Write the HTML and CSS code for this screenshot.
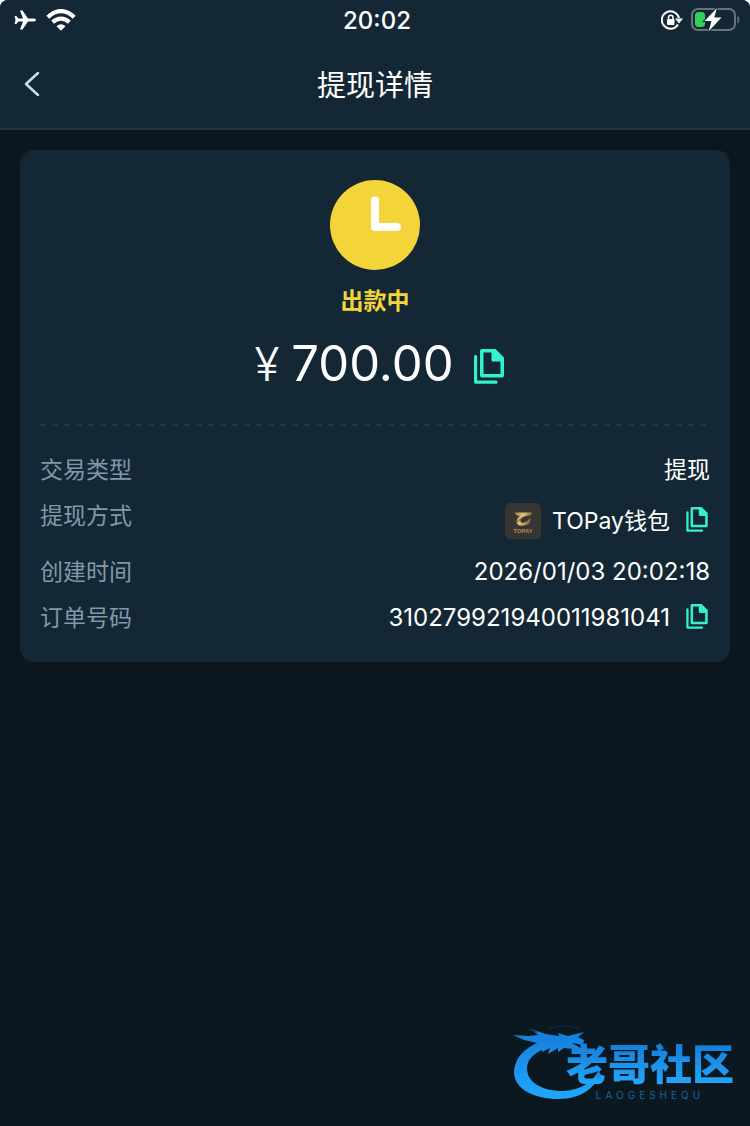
FILE: index.html
```html
<!DOCTYPE html>
<html lang="zh-CN">
<head>
<meta charset="utf-8">
<meta name="viewport" content="width=device-width, initial-scale=1">
<title>提现详情</title>
<link rel="stylesheet" href="styles.css">
</head>
<body>
<svg class="defs" width="0" height="0" aria-hidden="true">
  <symbol id="copy" viewBox="0 0 30 35">
    <path d="M1.6 7.5V33.2H22" fill="none" stroke="currentColor" stroke-width="3.2" stroke-linecap="round" stroke-linejoin="round"/>
    <path fill-rule="evenodd" d="M8 0H21.5L30 8.5V26.500Q30 28.500 28 28.500H8Q6 28.500 6 26.500V2Q6 0 8 0ZM9.500 3.500V25H26.500V12.500H19Q17.500 12.500 17.500 11V3.500Z" fill="currentColor"/>
  </symbol>
</svg>
<div class="screen">
  <header class="top">
    <div class="status">
      <div class="status-left">
        <svg width="22" height="20" viewBox="0 0 22 20" aria-hidden="true"><path fill="#fff" d="M22 10Q22 11.400 19.500 11.400H14L8.500 19.500H6L9 11.400H4.500L2.300 14H.6L1.500 10L.6 6H2.300L4.500 8.600H9L6 .5H8.500L14 8.600H19.500Q22 8.600 22 10Z"/></svg>
        <svg width="30" height="22" viewBox="0 0 30 22" aria-hidden="true"><g fill="none" stroke="#fff" stroke-width="4.200"><path d="M1.800 8.200Q15-4 28.200 8.200"/><path d="M6.600 13.200Q15 6 23.400 13.200"/></g><path fill="#fff" d="M10.500 17.200Q15 13.500 19.500 17.200L15 21.800Z"/></svg>
      </div>
      <time class="clock">20:02</time>
      <div class="status-right">
        <svg width="22" height="20" viewBox="0 0 22 20" aria-hidden="true"><path d="M17 14.500A8.700 8.700 0 1 1 18 8" fill="none" stroke="#fff" stroke-width="2"/><path fill="#fff" d="M14 8.500H22L18 13.500Z"/><rect x="6" y="9" width="7.500" height="6" rx="1" fill="#fff"/><path d="M7.500 9.500V7.500A2.200 2.200 0 0 1 12 7.500V9.500" fill="none" stroke="#fff" stroke-width="1.500"/></svg>
        <svg width="49" height="24" viewBox="0 0 49 24" aria-hidden="true"><rect x="1" y="1" width="43" height="21" rx="6" fill="none" stroke="#66747e" stroke-width="2"/><path d="M47 8.500Q49 11.500 47 15Z" fill="#66747e" stroke="#66747e"/><rect x="4" y="4" width="10" height="15" rx="3.500" fill="#32cf5b"/><path d="M26 0L13.500 13H20.500L17.500 23.500L30.500 9.500H23.200Z" fill="#fff" stroke="#142735" stroke-width="2" paint-order="stroke"/></svg>
      </div>
    </div>
    <div class="nav">
      <button class="back" type="button" aria-label="返回"><svg width="18" height="26" viewBox="0 0 18 26" aria-hidden="true"><path d="M15 2L3 13L15 24" fill="none" stroke="#c8dcec" stroke-width="2.500" stroke-linecap="round" stroke-linejoin="round"/></svg></button>
      <h1 class="title">提现详情</h1>
    </div>
  </header>
  <main class="card">
    <section class="summary">
      <svg width="90" height="90" viewBox="0 0 90 90" aria-hidden="true"><circle cx="45" cy="45" r="45" fill="#f3d539"/><path d="M45 20.500V47H67" fill="none" stroke="#fff" stroke-width="8" stroke-linecap="round" stroke-linejoin="round"/></svg>
      <p class="state">出款中</p>
      <div class="amount"><span class="currency">¥</span><span class="number">700.00</span><button class="copy copy-large" type="button" aria-label="复制金额"><svg aria-hidden="true"><use href="#copy"/></svg></button></div>
    </section>
    <dl class="details">
      <div class="row"><dt>交易类型</dt><dd>提现</dd></div>
      <div class="row row-method"><dt>提现方式</dt><dd>
        <svg class="wallet" viewBox="0 0 36 36" aria-hidden="true"><defs><linearGradient id="gold" x2="1" y2=".3"><stop stop-color="#a87a3f"/><stop offset=".5" stop-color="#e3c27c"/><stop offset="1" stop-color="#8a6535"/></linearGradient></defs><rect width="36" height="36" rx="5" fill="#373534"/><path fill="url(#gold)" d="M9.500 9.500H27Q26 13 22.500 13.300Q16 14 15.300 18Q15.300 20.500 19 19.500Q23.500 18 25.500 14.500Q26.500 21 20 22.500Q11.500 24 11.500 18.500Q11.800 14.500 15 13Q11 13 9.500 9.500Z"/><path d="M12 19Q16 14 24 12.500" stroke="#373534" stroke-width=".8" fill="none"/><text class="wallet-name" x="18" y="30" text-anchor="middle">TOPAY</text></svg>
        <span>TOPay钱包</span><button class="copy" type="button" aria-label="复制提现方式"><svg aria-hidden="true"><use href="#copy"/></svg></button></dd></div>
      <div class="row"><dt>创建时间</dt><dd class="digits">2026/01/03 20:02:18</dd></div>
      <div class="row"><dt>订单号码</dt><dd class="digits"><span>310279921940011981041</span><button class="copy" type="button" aria-label="复制订单号码"><svg aria-hidden="true"><use href="#copy"/></svg></button></dd></div>
    </dl>
  </main>
  <aside class="brand">
    <svg class="dragon" width="90" height="76" viewBox="0 0 90 76" aria-hidden="true"><defs><linearGradient id="blue" gradientUnits="userSpaceOnUse" x1="0" y1="0" x2="0" y2="76"><stop stop-color="#1479d8"/><stop offset="1" stop-color="#20a8ff"/></linearGradient></defs><g fill="url(#blue)"><path d="M30 17Q3 27 2 48C2 66 24 75 46 75C70 75 88 62 88 44C82 58 68 66 52 67C32 67 15 60 15 44Q15 32 34 24Z"/><path d="M1 11L16 12L26 11L19 5L34 10L47 12L46 9L56 12L72 8L66 13L72 16L71 21L60 19L70 25L66 29L62 25L52 24L46 28L46 24L36 30L38 24L30 28L30 20L12 16Z"/></g><path d="M37 5Q54-1 68 5M25 8L16 5" fill="none" stroke="#12304a" stroke-width="1"/></svg>
    <div class="brand-words"><span class="brand-name">老哥社区</span><span class="brand-latin">LAOGESHEQU</span></div>
  </aside>
</div>
</body>
</html>
```
FILE: styles.css
```css
* { box-sizing: border-box; }
body { margin: 0; background: #fff; }
.defs { position: absolute; }
.screen {
  position: relative;
  min-height: 100vh;
  border-radius: 8px 8px 0 0;
  overflow: hidden;
  background: #0c1820;
  color: #fff;
  font-family: Inter, "Noto Sans CJK SC", sans-serif;
  font-size: 23px;
  line-height: 30px;
}
svg { display: block; flex: none; }
button { padding: 0; border: 0; background: none; color: inherit; cursor: pointer; }
.top { background: #142735; border-bottom: 2px solid #1e3545; }
.status {
  display: grid;
  grid-template-columns: 1fr auto 1fr;
  align-items: center;
  height: 40px;
  padding: 0 10px 0 14px;
}
.status-left, .status-right { display: flex; align-items: center; gap: 10px; }
.status-right { justify-content: flex-end; gap: 8px; }
.clock { padding-top: 2px; font-size: 24px; font-weight: 500; }
.nav {
  display: grid;
  grid-template-columns: 48px 1fr 48px;
  align-items: center;
  height: 88px;
  padding: 0 8px;
}
.back { display: grid; place-items: center; height: 48px; }
.title { margin: 0; padding-top: 4px; text-align: center; font-size: 29px; line-height: 40px; font-weight: 400; }
.card {
  margin: 20px;
  padding: 30px 20px 29px;
  border-radius: 14px;
  background: #142735;
  box-shadow: 0 2px 10px rgba(0, 0, 0, .15);
}
.summary { display: flex; flex-direction: column; align-items: center; }
.state { margin: 16px 0 0; color: #f3d539; font-weight: 700; }
.amount {
  display: flex;
  align-items: center;
  margin-top: 18px;
  padding-left: 8px;
  line-height: 60px;
}
.currency { font-size: 46px; font-weight: 300; margin-right: 12px; }
.number { font-size: 49px; }
.copy { color: #32f1cf; margin: 0 2px 4px 16px; }
.copy svg { width: 22px; height: 25px; }
.copy-large { margin: 4px 0 0 20px; }
.copy-large svg { width: 30px; height: 35px; }
.details {
  display: grid;
  gap: 16px;
  margin: 30px 0 0;
  padding-top: 31px;
  background: repeating-linear-gradient(90deg, #223846 0 6px, transparent 6px 12px) top / 100% 2px no-repeat;
}
.row { display: flex; justify-content: space-between; }
.row-method { min-height: 40px; }
dt { color: #8299a9; }
dd { display: flex; align-items: center; margin: 0; }
.digits { font-size: 24px; }
.wallet { width: 36px; height: 36px; margin-right: 11px; }
.wallet-name { font: 700 6px "Liberation Sans", sans-serif; fill: #b28a4e; }
.brand { position: absolute; right: 16px; bottom: 26px; display: flex; align-items: flex-end; }
.dragon { margin-right: -36px; }
.brand-words { display: flex; flex-direction: column; }
.brand-name {
  font-size: 42px;
  line-height: 50px;
  font-weight: 900;
  background: linear-gradient(#1479d8, #24adff);
  background-clip: text;
  color: transparent;
}
.brand-latin { align-self: center; font-size: 10px; line-height: 10px; letter-spacing: 4px; color: #17669f; }
```
